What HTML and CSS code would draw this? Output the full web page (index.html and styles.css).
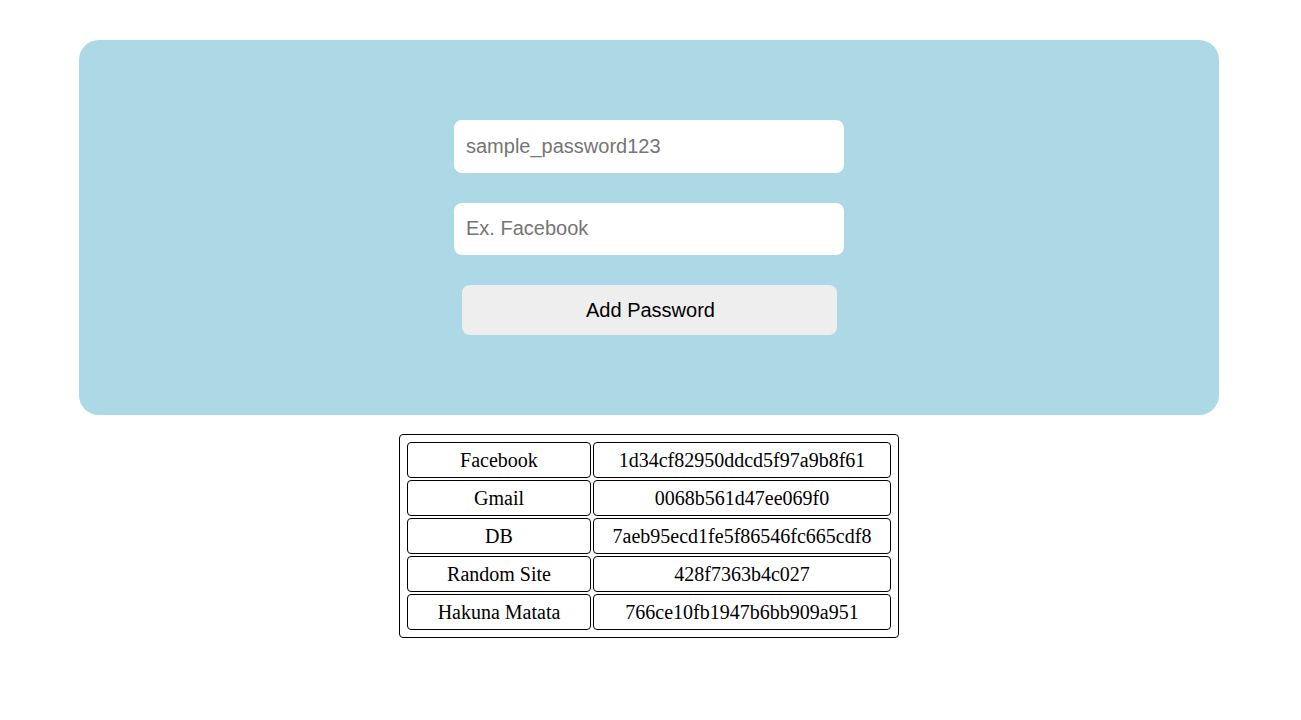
FILE: index.html
```html
<!DOCTYPE html>
<html>
<head>
<meta charset="utf-8">
<link rel="stylesheet" href="styles.css">
</head>
<body>
<div class="page">
  <form class="panel">
    <input class="field" type="text" placeholder="sample_password123">
    <input class="field" type="text" placeholder="Ex. Facebook">
    <button class="add-btn" type="button">Add Password</button>
  </form>
  <table class="list">
    <tr><td class="site">Facebook</td><td class="hash">1d34cf82950ddcd5f97a9b8f61</td></tr>
    <tr><td class="site">Gmail</td><td class="hash">0068b561d47ee069f0</td></tr>
    <tr><td class="site">DB</td><td class="hash">7aeb95ecd1fe5f86546fc665cdf8</td></tr>
    <tr><td class="site">Random Site</td><td class="hash">428f7363b4c027</td></tr>
    <tr><td class="site">Hakuna Matata</td><td class="hash">766ce10fb1947b6bb909a951</td></tr>
  </table>
</div>
</body>
</html>
```
FILE: styles.css
```css
html, body {
  margin: 0;
  padding: 0;
  background: #ffffff;
}

.page {
  width: 1140px;
  margin: 40px 0 0 79px;
  display: flex;
  flex-direction: column;
  align-items: center;
}

.panel {
  box-sizing: border-box;
  width: 1140px;
  height: 375px;
  margin: 0;
  padding: 80px 0;
  background: #add8e6;
  border-radius: 20px;
  display: flex;
  flex-direction: column;
  align-items: center;
  gap: 30px;
}

.field {
  box-sizing: border-box;
  width: 390px;
  height: 52.5px;
  flex: none;
  margin: 0;
  padding: 0 12px;
  border: none;
  border-radius: 8px;
  background: #ffffff;
  font-family: "Liberation Sans", Arial, sans-serif;
  font-size: 20px;
  color: #000;
  outline: none;
}

.field::placeholder {
  color: #757575;
}

.add-btn {
  box-sizing: border-box;
  width: 375px;
  height: 50px;
  flex: none;
  margin: 0;
  padding: 0 0 0 3px;
  border: none;
  border-radius: 8px;
  background: #eeeeee;
  font-family: "Liberation Sans", Arial, sans-serif;
  font-size: 20px;
  color: #000;
}

.list {
  box-sizing: border-box;
  width: 500px;
  margin-top: 19px;
  border: 1px solid #000;
  border-radius: 4px;
  padding: 5px;
  border-spacing: 2px;
  border-collapse: separate;
  font-family: "Liberation Serif", "Times New Roman", serif;
  font-size: 20px;
  color: #000;
}

.list td {
  box-sizing: border-box;
  height: 36px;
  padding: 5px;
  line-height: 24px;
  border: 1px solid #000;
  border-radius: 4px;
  text-align: center;
  white-space: nowrap;
}

.list td.site {
  width: 184px;
}
```
